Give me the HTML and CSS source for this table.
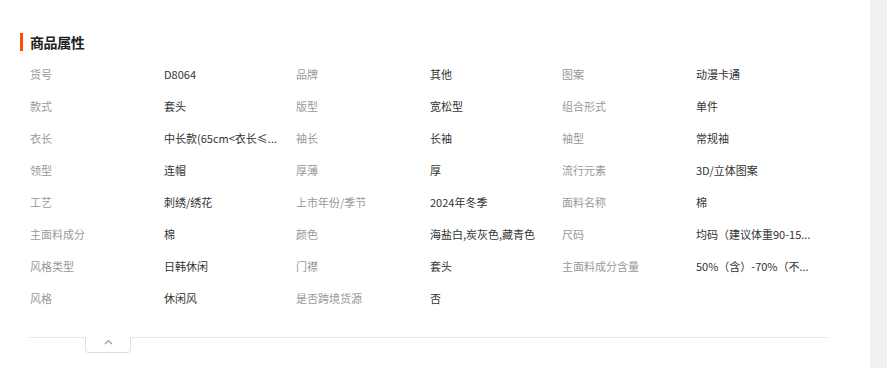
FILE: index.html
```html
<!DOCTYPE html>
<html lang="zh-CN">
<head>
<meta charset="utf-8">
<title>商品属性</title>
<link rel="stylesheet" href="styles.css">
</head>
<body>
<div class="page">
  <section class="attrs">
    <h2 class="attrs-title">商品属性</h2>
    <div class="attr-grid">
      <div class="attr"><span class="attr-label">货号</span><span class="attr-value">D8064</span></div>
      <div class="attr"><span class="attr-label">品牌</span><span class="attr-value">其他</span></div>
      <div class="attr"><span class="attr-label">图案</span><span class="attr-value">动漫卡通</span></div>

      <div class="attr"><span class="attr-label">款式</span><span class="attr-value">套头</span></div>
      <div class="attr"><span class="attr-label">版型</span><span class="attr-value">宽松型</span></div>
      <div class="attr"><span class="attr-label">组合形式</span><span class="attr-value">单件</span></div>

      <div class="attr"><span class="attr-label">衣长</span><span class="attr-value" title="中长款(65cm&lt;衣长≤80cm)">中长款(65cm&lt;衣长≤...</span></div>
      <div class="attr"><span class="attr-label">袖长</span><span class="attr-value">长袖</span></div>
      <div class="attr"><span class="attr-label">袖型</span><span class="attr-value">常规袖</span></div>

      <div class="attr"><span class="attr-label">领型</span><span class="attr-value">连帽</span></div>
      <div class="attr"><span class="attr-label">厚薄</span><span class="attr-value">厚</span></div>
      <div class="attr"><span class="attr-label">流行元素</span><span class="attr-value">3D/立体图案</span></div>

      <div class="attr"><span class="attr-label">工艺</span><span class="attr-value">刺绣/绣花</span></div>
      <div class="attr"><span class="attr-label">上市年份/季节</span><span class="attr-value">2024年冬季</span></div>
      <div class="attr"><span class="attr-label">面料名称</span><span class="attr-value">棉</span></div>

      <div class="attr"><span class="attr-label">主面料成分</span><span class="attr-value">棉</span></div>
      <div class="attr"><span class="attr-label">颜色</span><span class="attr-value">海盐白,炭灰色,藏青色</span></div>
      <div class="attr"><span class="attr-label">尺码</span><span class="attr-value" title="均码（建议体重90-150斤）">均码（建议体重90-15...</span></div>

      <div class="attr"><span class="attr-label">风格类型</span><span class="attr-value">日韩休闲</span></div>
      <div class="attr"><span class="attr-label">门襟</span><span class="attr-value">套头</span></div>
      <div class="attr"><span class="attr-label">主面料成分含量</span><span class="attr-value" title="50%（含）-70%（不含）">50%（含）-70%（不...</span></div>

      <div class="attr"><span class="attr-label">风格</span><span class="attr-value">休闲风</span></div>
      <div class="attr"><span class="attr-label">是否跨境货源</span><span class="attr-value">否</span></div>
    </div>
    <div class="attrs-foot">
      <button class="collapse-tab" type="button" aria-label="收起">
        <svg width="9" height="6" viewBox="0 0 9 6"><path d="M1 5 L4.5 1.5 L8 5" fill="none" stroke="#999" stroke-width="1.2"/></svg>
      </button>
    </div>
  </section>
</div>
</body>
</html>
```
FILE: styles.css
```css
html, body {
  margin: 0;
  padding: 0;
}
body {
  background: #f1f1f1;
  font-family: "Noto Sans CJK SC", "Noto Sans", sans-serif;
  font-size: 11px;
}
.page {
  width: 870px;
  height: 368px;
  background: #fff;
}
.attrs {
  padding: 33px 0 0 20px;
}
.attrs-title {
  margin: 0;
  height: 18px;
  line-height: 18px;
  font-size: 14px;
  font-weight: 700;
  color: #222;
  border-left: 3px solid #ff4f00;
  padding-left: 7px;
  letter-spacing: -0.4px;
}
.attr-grid {
  margin: 7px 0 0 10px;
  width: 798px;
  display: grid;
  grid-template-columns: repeat(3, 266px);
}
.attr {
  display: flex;
  height: 32px;
  align-items: center;
}
.attr-label {
  width: 134px;
  flex: none;
  color: #999;
}
.attr-value {
  width: 126px;
  flex: none;
  color: #333;
  white-space: nowrap;
}
.attrs-foot {
  margin: 23px 0 0 9px;
  width: 799px;
  border-top: 1px solid #e6e6e6;
}
.collapse-tab {
  display: flex;
  align-items: center;
  justify-content: center;
  margin: -1px 0 0 56px;
  width: 46px;
  height: 16px;
  padding: 0 0 6px;
  background: #fff;
  border: 1px solid #ddd;
  border-top: none;
  border-radius: 0 0 4px 4px;
  cursor: pointer;
}
.collapse-tab svg {
  display: block;
}
```
